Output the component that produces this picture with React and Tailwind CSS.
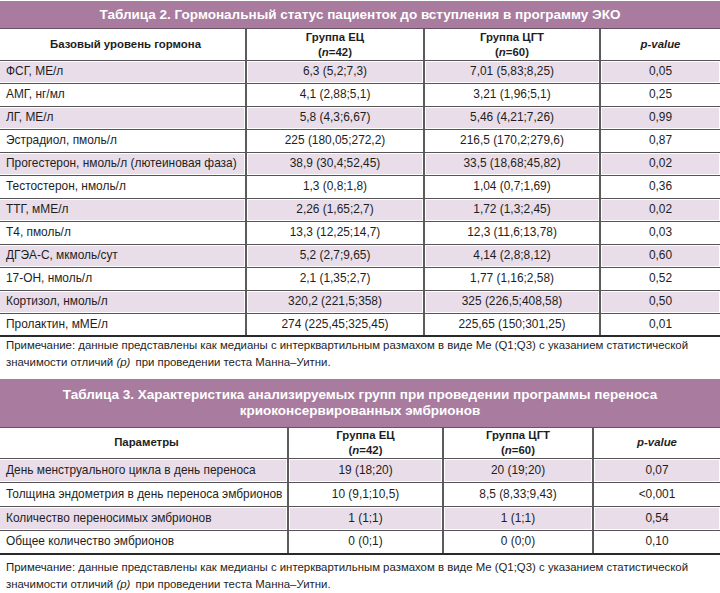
import React from 'react';

const hormones = [
  ['ФСГ, МЕ/л', '6,3 (5,2;7,3)', '7,01 (5,83;8,25)', '0,05'],
  ['АМГ, нг/мл', '4,1 (2,88;5,1)', '3,21 (1,96;5,1)', '0,25'],
  ['ЛГ, МЕ/л', '5,8 (4,3;6,67)', '5,46 (4,21;7,26)', '0,99'],
  ['Эстрадиол, пмоль/л', '225 (180,05;272,2)', '216,5 (170,2;279,6)', '0,87'],
  ['Прогестерон, нмоль/л (лютеиновая фаза)', '38,9 (30,4;52,45)', '33,5 (18,68;45,82)', '0,02'],
  ['Тестостерон, нмоль/л', '1,3 (0,8;1,8)', '1,04 (0,7;1,69)', '0,36'],
  ['ТТГ, мМЕ/л', '2,26 (1,65;2,7)', '1,72 (1,3;2,45)', '0,02'],
  ['Т4, пмоль/л', '13,3 (12,25;14,7)', '12,3 (11,6;13,78)', '0,03'],
  ['ДГЭА-С, мкмоль/сут', '5,2 (2,7;9,65)', '4,14 (2,8;8,12)', '0,60'],
  ['17-ОН, нмоль/л', '2,1 (1,35;2,7)', '1,77 (1,16;2,58)', '0,52'],
  ['Кортизол, нмоль/л', '320,2 (221,5;358)', '325 (226,5;408,58)', '0,50'],
  ['Пролактин, мМЕ/л', '274 (225,45;325,45)', '225,65 (150;301,25)', '0,01'],
];

const params = [
  ['День менструального цикла в день переноса', '19 (18;20)', '20 (19;20)', '0,07'],
  ['Толщина эндометрия в день переноса эмбрионов', '10 (9,1;10,5)', '8,5 (8,33;9,43)', '<0,001'],
  ['Количество переносимых эмбрионов', '1 (1;1)', '1 (1;1)', '0,54'],
  ['Общее количество эмбрионов', '0 (0;1)', '0 (0;0)', '0,10'],
];

const Cell = ({ shaded, first, children, className = '' }) => (
  <div className={`flex ${first ? '' : 'border-l-2 border-[#5c5c5c]'}`}>
    <div
      className={`flex-1 flex items-center ${first ? 'justify-start pl-[6px]' : 'justify-center'} ${
        shaded ? 'bg-[#e8dde8] my-px ' + (first ? 'mr-px' : 'mx-px') : ''
      } ${className}`}
    >
      {children}
    </div>
  </div>
);

const GroupHead = ({ name, n }) => (
  <div className="text-center font-bold leading-[15px] text-[11.4px]">
    <div>{name}</div>
    <div>
      (<i>n</i>={n})
    </div>
  </div>
);

const Table = ({ cols, titleLines, firstHead, rows, rowH, headH, titleClass }) => (
  <div className="w-full">
    <div
      className={`bg-[#a87b9f] border-b border-[#6a5266] text-white font-bold text-[13.5px] text-center ${titleClass}`}
    >
      {titleLines.map((t) => (
        <div key={t}>{t}</div>
      ))}
    </div>
    <div className={`grid ${cols} ${headH} border-b border-[#555]`}>
      <Cell first>
        <span className="w-full text-center font-bold text-[11.4px]">{firstHead}</span>
      </Cell>
      <Cell>
        <GroupHead name="Группа ЕЦ" n="42" />
      </Cell>
      <Cell>
        <GroupHead name="Группа ЦГТ" n="60" />
      </Cell>
      <Cell>
        <span className="font-bold italic text-[11.4px]">p-value</span>
      </Cell>
    </div>
    {rows.map((r, i) => {
      const shaded = i % 2 === 0;
      const last = i === rows.length - 1;
      return (
        <div
          key={r[0]}
          className={`grid ${cols} ${rowH} ${last ? 'border-b-2 border-[#2a2a2a]' : 'border-b border-[#555]'}`}
        >
          {r.map((c, j) => (
            <Cell key={j} first={j === 0} shaded={shaded}>
              {c}
            </Cell>
          ))}
        </div>
      );
    })}
  </div>
);

const Note = ({ className = '' }) => (
  <div className={`pl-[6px] pr-2 leading-[17px] text-[11.4px] text-[#1e1e1e] ${className}`}>
    <div>
      Примечание: данные представлены как медианы с интерквартильным размахом в виде Me (Q1;Q3) с указанием статистической
    </div>
    <div>
      значимости отличий <i className="pr-[2px]">(p)</i> при проведении теста Манна–Уитни.
    </div>
  </div>
);

export default function App() {
  return (
    <div className="w-[720px] h-[593px] bg-white overflow-hidden text-[11.9px] text-[#1e1e1e] font-['Liberation_Sans',Arial,sans-serif]">
      <div className="pt-px">
        <Table
          cols="grid-cols-[245px_178px_176px_1fr]"
          titleLines={['Таблица 2. Гормональный статус пациенток до вступления в программу ЭКО']}
          titleClass="h-[28px] leading-[28px]"
          firstHead="Базовый уровень гормона"
          rows={hormones}
          headH="h-[32px]"
          rowH="h-[23px]"
        />
        <Note />
      </div>
      <div className="mt-[8px]">
        <Table
          cols="grid-cols-[287px_155px_150px_1fr]"
          titleLines={[
            'Таблица 3. Характеристика анализируемых групп при проведении программы переноса',
            'криоконсервированных эмбрионов',
          ]}
          titleClass="py-[8px] leading-[16px]"
          firstHead="Параметры"
          rows={params}
          headH="h-[31px]"
          rowH="h-[24px]"
        />
        <Note className="pt-[4px]" />
      </div>
    </div>
  );
}
